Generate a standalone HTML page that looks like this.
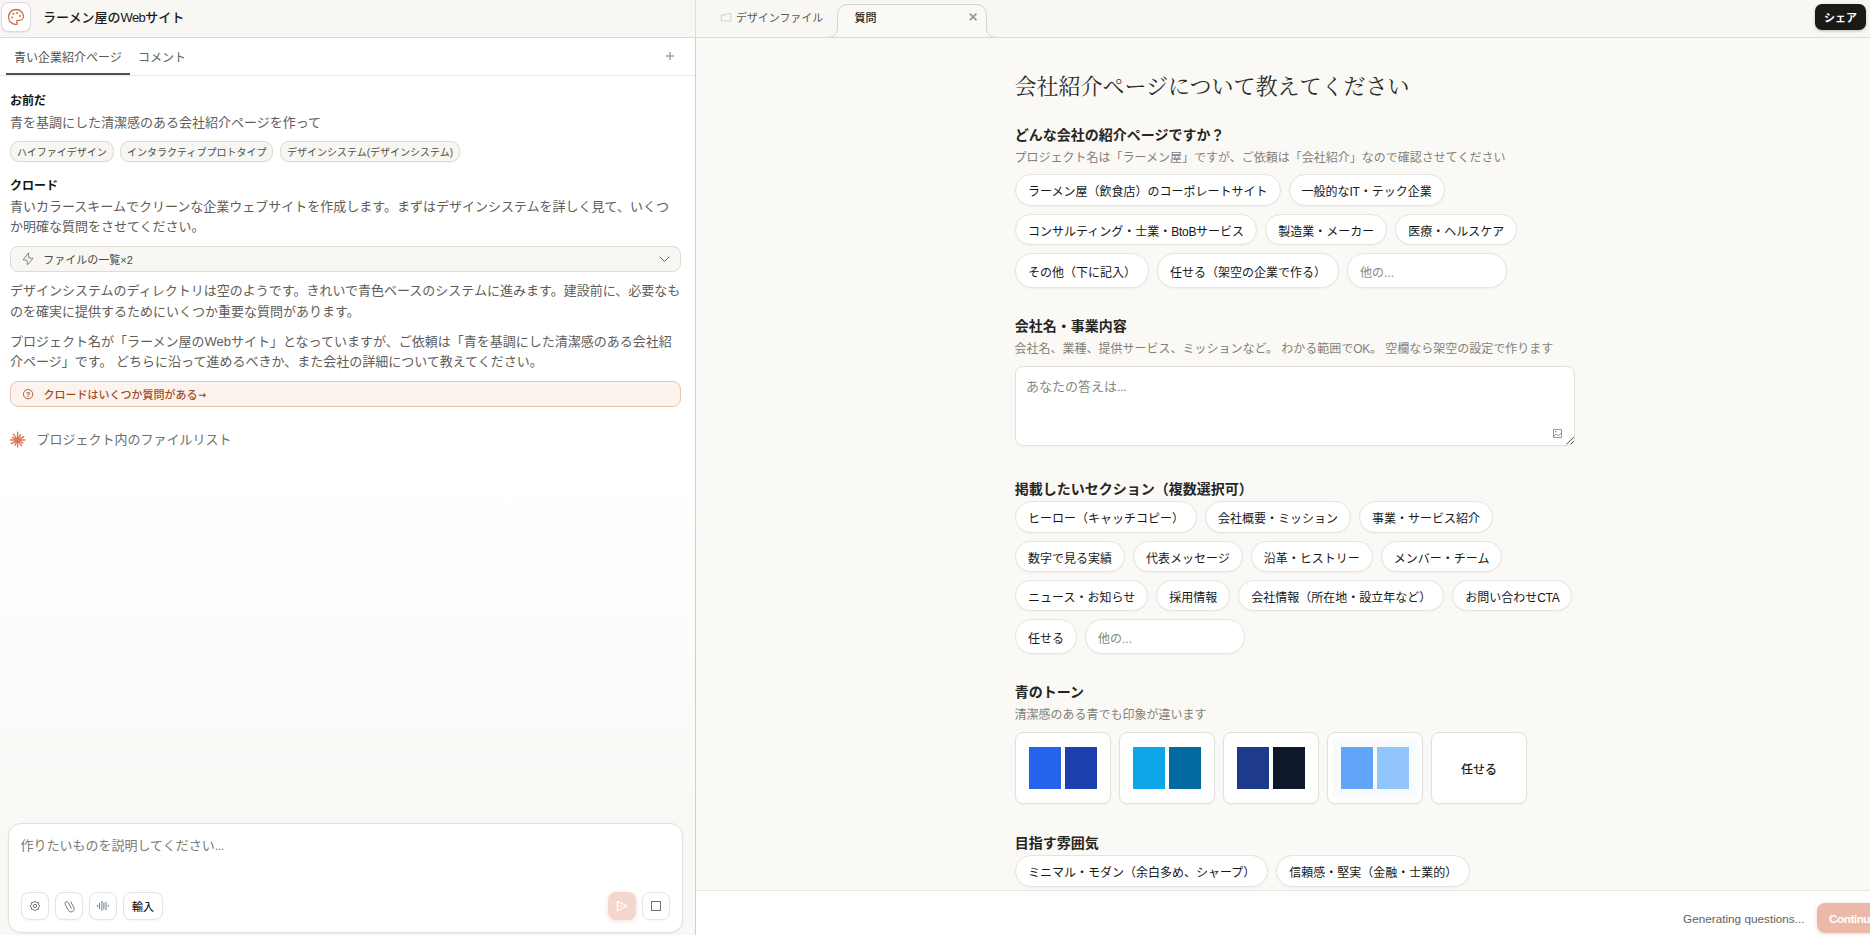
<!DOCTYPE html>
<html lang="ja">
<head>
<meta charset="utf-8">
<title>ラーメン屋のWebサイト</title>
<style>
*{box-sizing:border-box;margin:0;padding:0}
html,body{width:1870px;height:935px;overflow:hidden;background:#faf9f5}
body{font-family:"Liberation Sans","Noto Sans CJK JP",sans-serif;color:#1f1e1d;font-size:13px;position:relative}
svg{position:absolute;overflow:visible}
.lt{font-size:1em;letter-spacing:-.3px}
.dots{letter-spacing:-.6px}
/* ---------- top bar ---------- */
#topbar{position:absolute;left:0;top:0;width:1870px;height:38px;background:#f8f7f3;border-bottom:1px solid #dcdad4}
#tdiv{position:absolute;left:695px;top:0;width:1px;height:37px;background:#deddd7}
#logo{position:absolute;left:1px;top:2px;width:29.5px;height:29.5px;background:#fff;border:1px solid #dddbd5;border-radius:8px;box-shadow:0 1px 1.5px rgba(0,0,0,.08)}
#title{position:absolute;left:43px;top:8px;font-size:13px;font-weight:500;line-height:20px;color:#1a1918;white-space:nowrap}
#share{position:absolute;left:1815px;top:4px;width:51px;height:26px;background:#1a1a17;color:#fff;border-radius:7px;font-size:11px;font-weight:700;line-height:26px;text-align:center;box-shadow:0 1px 3px rgba(0,0,0,.25);padding-top:1px}
#rtab1{position:absolute;left:736px;top:8px;font-size:10.95px;line-height:20px;color:#5a5955;white-space:nowrap}
#rtab2{position:absolute;left:854.5px;top:8px;font-size:11px;font-weight:500;line-height:20px;color:#1a1918;white-space:nowrap}
/* ---------- left panel ---------- */
#left{position:absolute;left:0;top:38px;width:696px;height:897px;background:linear-gradient(180deg,#fff 0,#fff 48%,#f9f8f5 90%);border-right:1px solid #cfcfd0}
#ltabs{position:absolute;left:0;top:0;width:695px;height:38px;border-bottom:1px solid #ebeae6}
.ltab{position:absolute;top:9.5px;font-size:12px;line-height:20px;color:#63625d;white-space:nowrap}
#lt1{left:14px;color:#55544f}
#lt2{left:138px}
#ltu{position:absolute;left:6px;top:35px;width:124px;height:2px;background:#55534e}
.who{position:absolute;left:10px;font-size:12px;font-weight:700;line-height:18px;color:#141413;white-space:nowrap}
.msg{position:absolute;left:10px;width:671px;font-size:13px;line-height:20.8px;color:#5e5d59}
.pill{position:absolute;top:103px;height:21px;border:1px solid #dddbd3;background:#f7f6f1;border-radius:9px;font-size:10px;line-height:19px;padding:1px 6px 0;color:#4f4e4a;white-space:nowrap;box-shadow:0 1px 1px rgba(0,0,0,.03)}
#toolbox{position:absolute;left:10px;top:208px;width:671px;height:26px;background:#f8f7f3;border:1px solid #dddbd3;border-radius:8px}
#toolbox span{position:absolute;left:32.300px;top:3.5px;font-size:11px;line-height:18px;color:#4a4944;white-space:nowrap}
#qbox{position:absolute;left:10px;top:343px;width:671px;height:26px;background:#fdf3ee;border:1px solid #efc2ad;border-radius:8px}
#qbox>span{position:absolute;left:32.5px;top:3.5px;font-size:11px;font-weight:500;line-height:18px;color:#a04d27;white-space:nowrap}
#qbox i{font-style:normal;font-family:"DejaVu Sans",sans-serif;font-weight:700;font-size:9.5px;position:relative;top:-.5px;margin-left:.5px}
#working{position:absolute;left:36.400px;top:392px;font-size:13px;line-height:20px;color:#6f6e69;white-space:nowrap}
#composer{position:absolute;left:8px;top:785px;width:674.5px;height:109.5px;background:#fff;border:1px solid #e3e1dc;border-radius:13px;box-shadow:0 1px 3px rgba(0,0,0,.05)}
#ph{position:absolute;left:11.5px;top:12px;font-size:13px;line-height:20px;color:#7b7a75;white-space:nowrap}
.ib{position:absolute;top:68px;width:28px;height:28px;background:#fff;border:1px solid #e6e4e0;border-radius:8px;box-shadow:0 1px 2px rgba(0,0,0,.04)}
#imp{width:40px;font-size:11px;font-weight:500;line-height:26px;text-align:center;color:#1a1918;padding-top:1px}
#send{background:#f4d7cc;border-color:#f4d7cc;box-shadow:0 1px 4px rgba(217,119,87,.25)}
/* ---------- right panel ---------- */
#right{position:absolute;left:696px;top:38px;width:1174px;height:897px;background:#faf9f5;overflow:hidden}
h1{position:absolute;left:318.5px;top:30.6px;font-family:"Liberation Serif","Noto Serif CJK JP","Noto Serif CJK SC",serif;font-weight:400;font-size:22px;line-height:36px;color:#2b2a28;white-space:nowrap}
.qt{position:absolute;left:318.7px;font-size:14px;font-weight:700;line-height:20px;color:#262521;white-space:nowrap}
.qs{position:absolute;left:318.5px;font-size:12px;line-height:18px;color:#828179;white-space:nowrap}
.row{position:absolute;left:319px;display:flex;gap:8px;white-space:nowrap;align-items:stretch}
.chip{height:31.4px;border:1px solid #e6e4de;background:#fff;border-radius:18px;font-size:12px;line-height:17.4px;padding:9px 12px 0;color:#181817;box-shadow:0 1px 2px rgba(0,0,0,.04)}
.tall .chip{height:35.4px;padding-top:11px}
.other{width:160px;color:#87867f}
#ta{position:absolute;left:319px;top:327.5px;width:560px;height:80.2px;background:#fff;border:1px solid #e3e1dc;border-radius:8px;box-shadow:0 1px 2px rgba(0,0,0,.03)}
#ta>span{position:absolute;left:10px;top:10.5px;font-size:13px;line-height:20px;color:#87867f}
.card{width:96px;height:72.3px;background:#fff;border:1px solid #e3e1dc;border-radius:8px;position:relative;box-shadow:0 1px 2px rgba(0,0,0,.04)}
.card b{position:absolute;left:5px;top:6px;right:5px;bottom:6px;border-radius:2px}
.card i{position:absolute;top:14px;width:32px;height:42.3px}
.card i.a{left:13px}.card i.b{left:49px}
#bottom{position:absolute;left:0;top:852px;width:1174px;height:45px;background:#fff;border-top:1px solid #e6e5e1}
#gen{position:absolute;left:987px;top:17.5px;font-size:11.75px;line-height:20px;color:#63625e;white-space:nowrap}
#cont{position:absolute;left:1120.5px;top:12px;width:80px;height:30px;background:#ebb9a8;border-radius:8px;color:#fff;font-weight:700;font-size:11.8px;letter-spacing:-.5px;line-height:32px;padding-left:12.5px;box-shadow:0 1px 4px rgba(217,119,87,.3)}
</style>
</head>
<body>
<div id="topbar">
  <div id="tdiv"></div>
  <div id="logo">
    <svg style="left:5px;top:5.3px" width="18" height="18" viewBox="0 0 24 24" fill="none" stroke="#d4694a" stroke-width="1.7" stroke-linecap="round" stroke-linejoin="round"><circle cx="13.5" cy="6.8" r="1.35" fill="#d4694a" stroke="none"/><circle cx="17.3" cy="10.6" r="1.35" fill="#d4694a" stroke="none"/><circle cx="8.6" cy="7.8" r="1.35" fill="#d4694a" stroke="none"/><circle cx="6.8" cy="12.6" r="1.35" fill="#d4694a" stroke="none"/><path d="M12 2C6.5 2 2 6.5 2 12s4.500 10 10 10c.926 0 1.648-.746 1.648-1.688 0-.437-.18-.835-.437-1.125-.29-.289-.438-.652-.438-1.125a1.640 1.640 0 0 1 1.668-1.668h1.996c3.051 0 5.555-2.503 5.555-5.554C21.965 6.012 17.461 2 12 2z"/></svg>
  </div>
  <div id="title">ラーメン屋の<span class="lt" style="letter-spacing:-.6px">Web</span>サイト</div>
  <svg style="left:720px;top:12px" width="12" height="10" viewBox="0 0 12 10" fill="none" stroke="#cfcdc7" stroke-width=".9" stroke-linejoin="round"><path d="M1.300 2.900H6.400L7.900 1.400H10.900V8.900H1.300Z"/></svg>
  <div id="rtab1">デザインファイル</div>
  <svg style="left:826px;top:3px" width="172" height="34" viewBox="0 0 172 34" fill="none"><path d="M2 34C8 34 11.500 31 11.500 24V12.500C11.500 6 15.500 1.500 22 1.500H150C156.500 1.500 160.500 6 160.500 12.500V24C160.500 31 164 34 170 34Z" fill="#faf9f5"/><path d="M2 34.500C8 34.500 11.500 31 11.500 24V12.500C11.500 6 15.500 1.500 22 1.500H150C156.500 1.500 160.500 6 160.500 12.500V24C160.500 31 164 34.500 170 34.500" stroke="#d6d4ce" stroke-width="1"/></svg>
  <div id="rtab2">質問</div>
  <svg style="left:969.2px;top:12.800px" width="8" height="8" viewBox="0 0 8 8" stroke="#9b9994" stroke-width="1.8" fill="none"><path d="M.8.6 7.400 7.100M7.400.6.8 7.100"/></svg>
  <div id="share">シェア</div>
</div>
<div id="left">
  <div id="ltabs">
    <div class="ltab" id="lt1">青い企業紹介ページ</div>
    <div class="ltab" id="lt2">コメント</div>
    <div id="ltu"></div>
    <svg style="left:666px;top:14px" width="8" height="8" viewBox="0 0 8 8" stroke="#a3a19c" stroke-width="1.5" fill="none"><path d="M4 0V8M0 4H8"/></svg>
  </div>
  <div class="who" style="top:54px">お前だ</div>
  <div class="msg" style="top:74.7px">青を基調にした清潔感のある会社紹介ページを作って</div>
  <div class="pill" style="left:10px">ハイファイデザイン</div>
  <div class="pill" style="left:120px">インタラクティブプロトタイプ</div>
  <div class="pill" style="left:280px">デザインシステム(デザインシステム)</div>
  <div class="who" style="top:139.4px">クロード</div>
  <div class="msg" style="top:158.6px">青いカラースキームでクリーンな企業ウェブサイトを作成します。まずはデザインシステムを詳しく見て、いくつか明確な質問をさせてください。</div>
  <div id="toolbox">
    <svg style="left:11px;top:4.100px" width="13" height="15" viewBox="22 251 13 15" fill="none" stroke="#77757a" stroke-width=".9" stroke-linejoin="round"><path d="M28.500 252.900 23 259.900 27.100 260.200 27.400 264.900 33 258.300 28.800 258Z"/></svg>
    <span>ファイルの一覧×2</span>
    <svg style="left:648px;top:9px" width="11" height="7" viewBox="0 0 11 7" fill="none" stroke="#5c5960" stroke-width=".95" stroke-linecap="round" stroke-linejoin="round"><path d="M1 1 5.500 5.500 10 1"/></svg>
  </div>
  <div class="msg" style="top:243.3px">デザインシステムのディレクトリは空のようです。きれいで青色ベースのシステムに進みます。建設前に、必要なものを確実に提供するためにいくつか重要な質問があります。</div>
  <div class="msg" style="top:293.6px">プロジェクト名が「ラーメン屋のWebサイト」となっていますが、ご依頼は「青を基調にした清潔感のある会社紹介ページ」です。 どちらに沿って進めるべきか、また会社の詳細について教えてください。</div>
  <div id="qbox">
    <svg style="left:11px;top:6px" width="12" height="12" viewBox="0 0 12 12" fill="none" stroke="#9a5636" stroke-width=".9"><circle cx="6.100" cy="6.200" r="4.650"/><text x="6.100" y="8.900" font-size="7.600" font-weight="700" font-family="Liberation Sans,sans-serif" text-anchor="middle" fill="#9a5636" stroke="none">?</text></svg>
    <span>クロードはいくつか質問がある<i>→</i></span>
  </div>
  <svg style="left:10px;top:393.500px" width="15.200" height="16.150" viewBox="0 0 16 17" fill="none" stroke="#d97757" stroke-width="1.500" stroke-linecap="round"><path d="M8 8.500L15.600 8.500M8 8.500L13.470 11.410M8 8.500L12.240 14.560M8 8.500L8 15.800M8 8.500L5.180 13.800M8 8.500L1.420 12.300M8 8.500L.6 8.500M8 8.500L2.300 5.590M8 8.500L3.640 2.270M8 8.500L8 .3M8 8.500L10.910 3.030M8 8.500L14.410 4.800"/><circle cx="8" cy="8.500" r="2.300" fill="#d97757" stroke="none"/></svg>
  <div id="working">プロジェクト内のファイルリスト</div>
  <div id="composer">
    <div id="ph">作りたいものを説明してください<span class="dots">...</span></div>
    <div class="ib" style="left:12px"><svg style="left:7px;top:7.3px" width="12" height="12" viewBox="0 0 12 12" fill="none" stroke="#5d5b57" stroke-width=".85" stroke-linejoin="round"><path d="M6.000 1.200 L7.470 2.450 L9.390 2.610 L9.550 4.530 L10.800 6.000 L9.550 7.470 L9.390 9.390 L7.470 9.550 L6.000 10.800 L4.530 9.550 L2.610 9.390 L2.450 7.470 L1.200 6.000 L2.450 4.530 L2.610 2.610 L4.530 2.450Z"/><circle cx="6" cy="6" r="1.700"/></svg></div>
    <div class="ib" style="left:46px"><svg style="left:5.900px;top:5px" width="15.400" height="16.500" viewBox="0 0 14 15" fill="none" stroke="#6a6873" stroke-width=".75" stroke-linecap="round"><g transform="rotate(-28 7 7.500)"><path d="M9.800 4.600V10.200A2.800 2.800 0 0 1 4.200 10.200V4A1.600 1.600 0 0 1 7.400 4V9.800"/></g></svg></div>
    <div class="ib" style="left:80px"><svg style="left:6px;top:7px" width="14" height="12" viewBox="0 0 14 12" fill="none" stroke="#6b7f99" stroke-width="1" stroke-linecap="butt"><path d="M1.500 4.900V6.900M3.500 3V9M5.900 1V11M7.900 2.500V9.500M10 1.800V10.200M12.300 4.900V6.900"/></svg></div>
    <div class="ib" id="imp" style="left:114px">輸入</div>
    <div class="ib" id="send" style="left:598.5px"><svg style="left:7.5px;top:6.5px" width="12" height="12" viewBox="0 0 12 12" fill="none" stroke="#fff" stroke-width="1.100" stroke-linejoin="round" stroke-linecap="round"><path d="M1.300 1.300 11.200 6 1.300 10.800ZM1.300 6H6"/></svg></div>
    <div class="ib" style="left:632.5px"><svg style="left:8.5px;top:7.600px" width="10" height="10" viewBox="0 0 10 10" fill="none" stroke="#66635f" stroke-width=".9"><rect x=".5" y=".5" width="9" height="9"/></svg></div>
  </div>
</div>
<div id="right">
  <h1>会社紹介ページについて教えてください</h1>
  <div class="qt" style="top:87px">どんな会社の紹介ページですか？</div>
  <div class="qs" style="top:110.5px">プロジェクト名は「ラーメン屋」ですが、ご依頼は「会社紹介」なので確認させてください</div>
  <div class="row" style="top:136.3px"><div class="chip">ラーメン屋（飲食店）のコーポレートサイト</div><div class="chip">一般的な<span class="lt">IT</span>・テック企業</div></div>
  <div class="row" style="top:175.7px"><div class="chip">コンサルティング・士業・<span class="lt">BtoB</span>サービス</div><div class="chip">製造業・メーカー</div><div class="chip">医療・ヘルスケア</div></div>
  <div class="row tall" style="top:215.1px"><div class="chip">その他（下に記入）</div><div class="chip">任せる（架空の企業で作る）</div><div class="chip other">他の...</div></div>
  <div class="qt" style="top:278px">会社名・事業内容</div>
  <div class="qs" style="top:301.5px">会社名、業種、提供サービス、ミッションなど。 わかる範囲で<span class="lt">OK</span>。 空欄なら架空の設定で作ります</div>
  <div id="ta"><span>あなたの答えは<span class="dots">...</span></span>
    <svg style="left:537.2px;top:62.600px" width="9.200" height="9.200" viewBox="0 0 10 10" fill="none" stroke="#77757a" stroke-width=".85" stroke-linejoin="round"><rect x=".5" y=".5" width="8.800" height="8.800"/><path d="M.7 8.200 2.600 5.800 4.600 6.600 6 7.400 9 4.300"/><circle cx="3" cy="2.900" r=".8" fill="#77757a" stroke="none"/></svg>
    <svg style="left:548.5px;top:68.800px" width="10" height="10" viewBox="0 0 10 10" fill="none" stroke="#444" stroke-width="1"><path d="M1.500 9.200 8.800 2.200M5.800 9.200 8.800 6.300"/></svg>
  </div>
  <div class="qt" style="top:441.4px">掲載したいセクション（複数選択可）</div>
  <div class="row" style="top:463.3px"><div class="chip">ヒーロー（キャッチコピー）</div><div class="chip">会社概要・ミッション</div><div class="chip">事業・サービス紹介</div></div>
  <div class="row" style="top:502.7px"><div class="chip">数字で見る実績</div><div class="chip">代表メッセージ</div><div class="chip">沿革・ヒストリー</div><div class="chip">メンバー・チーム</div></div>
  <div class="row" style="top:542.1px"><div class="chip">ニュース・お知らせ</div><div class="chip">採用情報</div><div class="chip">会社情報（所在地・設立年など）</div><div class="chip">お問い合わせ<span class="lt">CTA</span></div></div>
  <div class="row tall" style="top:581px"><div class="chip">任せる</div><div class="chip other">他の...</div></div>
  <div class="qt" style="top:643.9px">青のトーン</div>
  <div class="qs" style="top:667.7px">清潔感のある青でも印象が違います</div>
  <div class="row" style="top:693.7px">
    <div class="card"><i class="a" style="background:#2563eb"></i><i class="b" style="background:#1e40af"></i></div>
    <div class="card"><i class="a" style="background:#0ea5e9"></i><i class="b" style="background:#0369a1"></i></div>
    <div class="card"><i class="a" style="background:#1e3a8a"></i><i class="b" style="background:#0f172a"></i></div>
    <div class="card"><b style="background:#f8fafc"></b><i class="a" style="background:#60a5fa"></i><i class="b" style="background:#93c5fd"></i></div>
    <div class="card" style="text-align:center;line-height:74px;font-size:12px;font-weight:500">任せる</div>
  </div>
  <div class="qt" style="top:795.4px">目指す雰囲気</div>
  <div class="row" style="top:817.3px"><div class="chip">ミニマル・モダン（余白多め、シャープ）</div><div class="chip">信頼感・堅実（金融・士業的）</div></div>
  <div id="bottom"><div id="gen">Generating questions...</div><div id="cont">Continue</div></div>
</div>
</body>
</html>
